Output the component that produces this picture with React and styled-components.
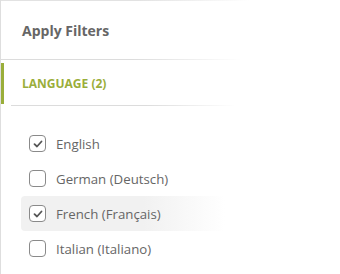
import React, { useState } from 'react'
import styled, { createGlobalStyle } from 'styled-components'

const GlobalStyle = createGlobalStyle`
    body {
        margin: 0;
        background: #fff;
        font-family: "Open Sans", "Liberation Sans", sans-serif;
    }
`

const Panel = styled.aside`
    position: relative;
    width: 340px;
    height: 274px;
    box-sizing: border-box;
    border-left: 1px solid #dedede;
    overflow: hidden;

    &::before {
        content: '';
        position: absolute;
        top: 0;
        left: 0;
        width: 250px;
        height: 1px;
        background: linear-gradient(to right, #e2e2e2 55%, rgba(255, 255, 255, 0));
    }
`

const Header = styled.div`
    position: relative;
    height: 60px;
    display: flex;
    align-items: center;
    padding-left: 21px;
    font-size: 14px;
    font-weight: 700;
    color: #666;

    &::after {
        content: '';
        position: absolute;
        left: 0;
        bottom: 0;
        width: 240px;
        height: 1px;
        background: linear-gradient(to right, #dcdcdc 55%, rgba(255, 255, 255, 0));
    }
`

const SectionTitle = styled.div`
    position: relative;
    margin-top: 3px;
    height: 41px;
    display: flex;
    align-items: center;
    padding-left: 21px;
    font-size: 12px;
    font-weight: 700;
    color: #9aae3a;

    &::before {
        content: '';
        position: absolute;
        left: -1px;
        top: 0;
        bottom: 0;
        width: 4px;
        background: #9aae3a;
    }
`

const Divider = styled.div`
    margin: 1px 0 0 10px;
    width: 225px;
    height: 1px;
    background: linear-gradient(to right, #dcdcdc 60%, rgba(255, 255, 255, 0));
`

const List = styled.ul`
    list-style: none;
    margin: 0;
    padding: 20px 0 0 20px;
`

const Item = styled.li`
    display: flex;
    align-items: center;
    gap: 10px;
    width: 196px;
    height: 35px;
    padding-left: 8px;
    border-radius: 4px;
    font-size: 13.25px;
    color: #666;
    cursor: pointer;
    background: ${p => p.$hover
        ? 'linear-gradient(to right, #f1f1f1 60%, rgba(255, 255, 255, 0))'
        : 'transparent'};
`

const Box = styled.span`
    width: 17px;
    height: 17px;
    flex-shrink: 0;
    box-sizing: border-box;
    border: 1px solid #8a8a8a;
    border-radius: 4px;
    background: #fff;
    display: grid;
    place-items: center;

    svg {
        width: 10px;
        height: 10px;
    }
`

const languages = [
    { label: 'English', checked: true },
    { label: 'German (Deutsch)', checked: false },
    { label: 'French (Français)', checked: true, hover: true },
    { label: 'Italian (Italiano)', checked: false },
]

function Check() {
    return (
        <svg viewBox="0 0 10 10">
            <polyline points="1.5,5.2 4,7.5 8.5,2.5" fill="none" stroke="#555" strokeWidth="1.8" strokeLinecap="round" strokeLinejoin="round" />
        </svg>
    )
}

export default function App() {
    const [items, setItems] = useState(languages)

    const toggle = (i) => {
        setItems(items.map((it, j) => j === i ? { ...it, checked: !it.checked } : it))
    }

    return (
        <>
            <GlobalStyle />
            <Panel>
                <Header>Apply Filters</Header>
                <SectionTitle>LANGUAGE ({items.filter(i => i.checked).length})</SectionTitle>
                <Divider />
                <List>
                    {items.map((it, i) => (
                        <Item key={it.label} $hover={it.hover} onClick={() => toggle(i)}>
                            <Box>{it.checked && <Check />}</Box>
                            {it.label}
                        </Item>
                    ))}
                </List>
            </Panel>
        </>
    )
}
